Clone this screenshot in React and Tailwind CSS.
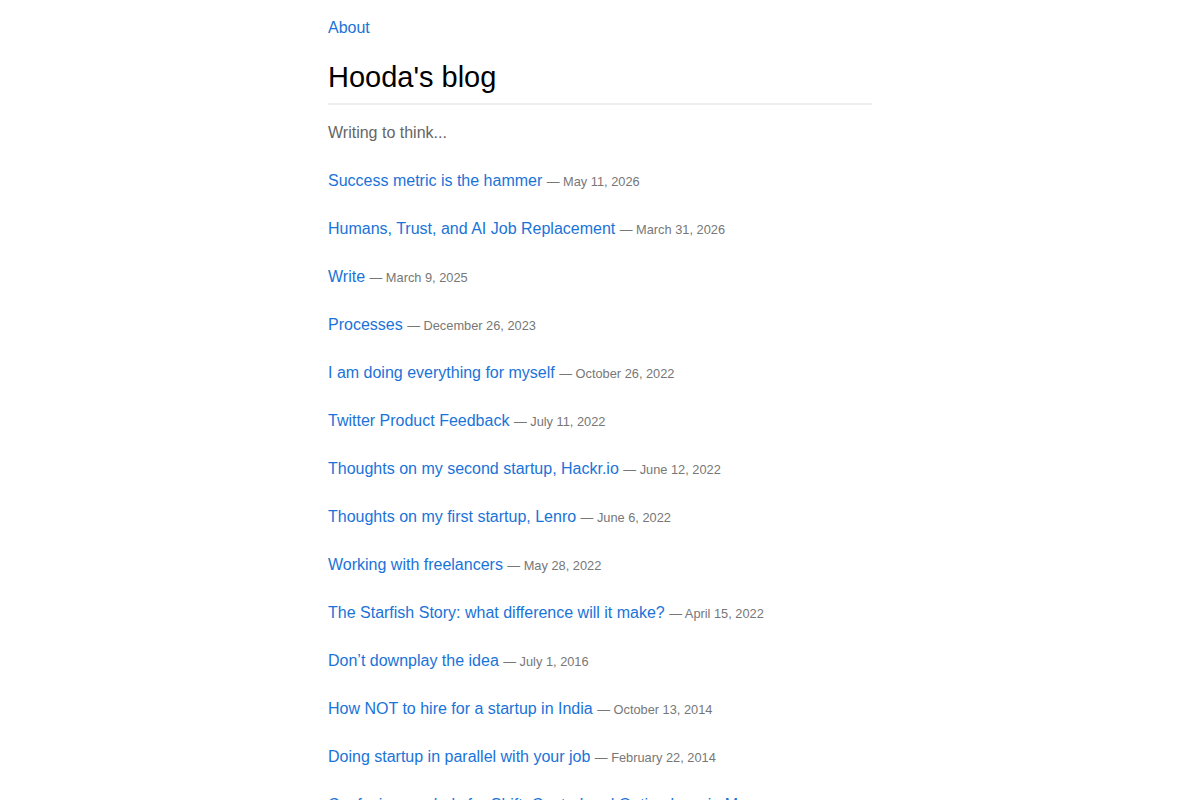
import React from "react";

const posts = [
  ["Success metric is the hammer", "May 11, 2026"],
  ["Humans, Trust, and AI Job Replacement", "March 31, 2026"],
  ["Write", "March 9, 2025"],
  ["Processes", "December 26, 2023"],
  ["I am doing everything for myself", "October 26, 2022"],
  ["Twitter Product Feedback", "July 11, 2022"],
  ["Thoughts on my second startup, Hackr.io", "June 12, 2022"],
  ["Thoughts on my first startup, Lenro", "June 6, 2022"],
  ["Working with freelancers", "May 28, 2022"],
  ["The Starfish Story: what difference will it make?", "April 15, 2022"],
  ["Don’t downplay the idea", "July 1, 2016"],
  ["How NOT to hire for a startup in India", "October 13, 2014"],
  ["Doing startup in parallel with your job", "February 22, 2014"],
  ["Confusing symbols for Shift, Control and Option keys in Mac", "January 5, 2014"],
];

export default function App() {
  return (
    <div
      className="min-h-screen bg-white"
      style={{ fontFamily: '"Liberation Sans", Arial, sans-serif' }}
    >
      <div className="w-[544px] mx-auto pt-[16px] pb-10">
        <nav className="leading-6 text-base">
          <a href="#" className="text-[#1a73d8]">About</a>
        </nav>
        <h1 className="mt-[19px] pb-[8px] text-[29px] leading-[36px] text-black border-b-2 border-[#eeeeee]">
          Hooda's blog
        </h1>
        <p className="mt-[16px] text-base leading-6 text-[#666666]">Writing to think...</p>
        <ul className="mt-6 flex flex-col gap-6">
          {posts.map(([title, date]) => (
            <li key={title} className="h-6 text-base leading-6 whitespace-nowrap">
              <a href="#" className="text-[#1a73d8]">{title}</a>{" "}
              <span className="text-[12.8px] leading-none text-[#777777]">— {date}</span>
            </li>
          ))}
        </ul>
      </div>
    </div>
  );
}
